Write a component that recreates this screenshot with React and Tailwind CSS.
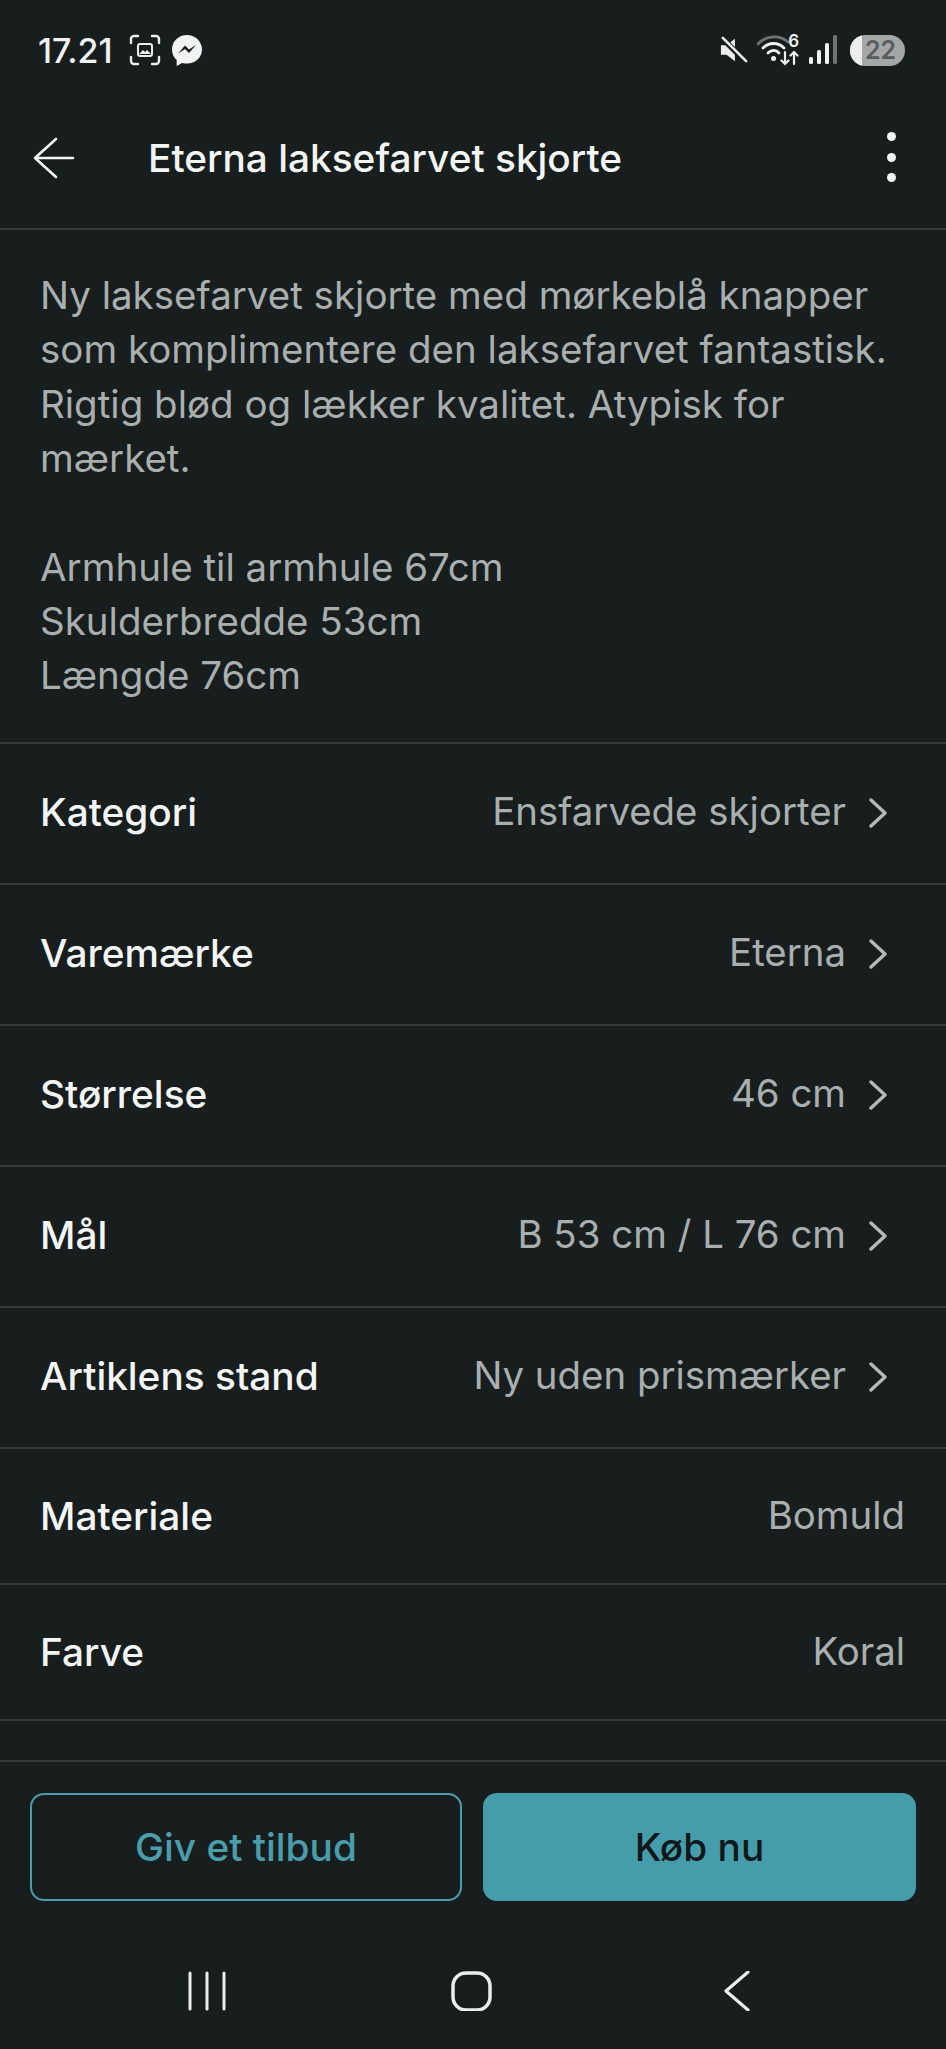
const rows = [
  { label: 'Kategori', value: 'Ensfarvede skjorter', link: true, h: 'h-[141px]' },
  { label: 'Varemærke', value: 'Eterna', link: true, h: 'h-[141px]' },
  { label: 'Størrelse', value: '46 cm', link: true, h: 'h-[141px]' },
  { label: 'Mål', value: 'B 53 cm / L 76 cm', link: true, h: 'h-[141px]' },
  { label: 'Artiklens stand', value: 'Ny uden prismærker', link: true, h: 'h-[141px]' },
  { label: 'Materiale', value: 'Bomuld', h: 'h-[136px]' },
  { label: 'Farve', value: 'Koral', h: 'h-[136px]' },
];

function StatusBar() {
  return (
    <div className="h-[100px] flex items-center justify-between pl-[38px] pr-[41px]">
      <div className="flex items-center">
        <span className="text-[34px] font-medium text-[#f1f3f3] w-[77px] whitespace-nowrap">17.21</span>
        <svg width="32" height="32" viewBox="0 0 32 32" fill="none" stroke="#eceeee" strokeWidth="2.4" strokeLinecap="round" className="ml-[14px]">
          <path d="M2 9V5a3 3 0 0 1 3-3h4M23 2h4a3 3 0 0 1 3 3v4M30 23v4a3 3 0 0 1-3 3h-4M9 30H5a3 3 0 0 1-3-3v-4" />
          <rect x="9" y="10" width="14" height="12" rx="2" strokeWidth="2" />
          <path d="M10 20l4-4 2 2 2-2 4 4z" fill="#eceeee" stroke="none" />
        </svg>
        <svg width="30" height="31" viewBox="0 0 30 31" className="ml-[11px]">
          <path d="M15 0C6.600 0 0 6.200 0 14.500c0 4.300 1.800 8 4.700 10.600V31l5.400-3c1.500.4 3.200.6 4.900.6 8.400 0 15-6.200 15-14.100S23.400 0 15 0z" fill="#f1f3f3" />
          <path d="M6 18.500l7-8 4 4 7-4.500-7 8-4-4z" fill="#181d1e" />
        </svg>
      </div>
      <div className="flex items-center">
        <svg width="28" height="28" viewBox="0 0 30 28" className="mr-[9px]">
          <path d="M1 9h6l9-7v24l-9-7H1z" fill="#eceeee" />
          <path d="M3 2l25 25" stroke="#181d1e" strokeWidth="6" />
          <path d="M3 1l25 25" stroke="#eceeee" strokeWidth="2.800" strokeLinecap="round" />
        </svg>
        <div className="relative w-[42px] h-[32px] mr-[10px]">
          <svg width="42" height="32" viewBox="0 0 42 32" fill="none" strokeLinecap="round">
            <path d="M1 10C9 1 23 1 31 8" stroke="#6f7373" strokeWidth="2.800" />
            <path d="M6 14c6-6 15-6 21 0" stroke="#f1f3f3" strokeWidth="2.800" />
            <path d="M11 19c3.500-3.500 8-3.500 11 0" stroke="#f1f3f3" strokeWidth="2.800" />
            <circle cx="16.500" cy="24.500" r="2.500" fill="#f1f3f3" />
            <path d="M28 18v12m-3.500-3.500 3.500 3.500 3.500-3.500M37 30V18m-3.500 3.500L37 18l3.500 3.500" stroke="#f1f3f3" strokeWidth="2.200" />
          </svg>
          <span className="absolute right-0 -top-[1px] text-[17px] font-semibold text-[#f1f3f3] leading-none">6</span>
        </div>
        <svg width="29" height="30" viewBox="0 0 29 30" className="mr-[12px]">
          <rect x="0" y="22" width="4" height="7" rx="1.500" fill="#f1f3f3" />
          <rect x="8" y="15" width="4" height="14" rx="1.500" fill="#f1f3f3" />
          <rect x="16" y="8" width="4" height="21" rx="1.500" fill="#f1f3f3" />
          <rect x="24" y="0" width="4" height="29" rx="1.500" fill="#6f7373" />
        </svg>
        <div className="w-[55px] h-[31px] rounded-full bg-[#a4a7a7] overflow-hidden flex items-center relative">
          <div className="absolute left-0 top-0 bottom-0 w-[12px] bg-[#eceeee]" />
          <span className="relative w-full text-center pl-[6px] text-[25px] leading-none font-semibold text-[#5a5d5e]">22</span>
        </div>
      </div>
    </div>
  );
}

function Row({ label, value, link, h }) {
  return (
    <div className={`${h} flex items-center justify-between pl-[40px] border-b-2 border-[#35393a] ${link ? 'pb-[3px] pr-[59px]' : 'pr-[41px]'}`}>
      <span className="text-[38.800px] font-medium text-[#f3f5f5]">{label}</span>
      <div className="flex items-center">
        <span className="text-[38.400px] text-[#a9afaf]">{value}</span>
        {link && (
          <svg width="18" height="30" viewBox="0 0 18 30" fill="none" stroke="#b4baba" strokeWidth="3.400" strokeLinecap="round" strokeLinejoin="round" className="ml-[23px] mt-[3px]">
            <path d="M2 2l14 13L2 28" />
          </svg>
        )}
      </div>
    </div>
  );
}

export default function App() {
  return (
    <div className="w-[946px] h-[2049px] bg-[#181d1e] flex flex-col overflow-hidden font-['Inter',sans-serif]">
      <StatusBar />

      <div className="h-[130px] flex items-center border-b-2 border-[#35393a] relative pl-[33px] pb-[12px]">
        <svg width="42" height="42" viewBox="0 0 42 42" fill="none" stroke="#f3f5f5" strokeWidth="2.600" strokeLinecap="round" strokeLinejoin="round">
          <path d="M40 21H2M23 2 2 21l21 19" />
        </svg>
        <span className="ml-[73px] text-[38.800px] font-medium text-[#f3f5f5]">Eterna laksefarvet skjorte</span>
        <div className="absolute right-[50px] top-[32px] flex flex-col gap-[11.500px]">
          <div className="w-[9px] h-[9px] rounded-full bg-[#f3f5f5]" />
          <div className="w-[9px] h-[9px] rounded-full bg-[#f3f5f5]" />
          <div className="w-[9px] h-[9px] rounded-full bg-[#f3f5f5]" />
        </div>
      </div>

      <div className="h-[514px] border-b-2 border-[#35393a] px-[40px] pt-[38px] text-[38.500px] leading-[54.400px] text-[#a9afaf]">
        <p>Ny laksefarvet skjorte med mørkeblå knapper</p>
        <p>som komplimentere den laksefarvet fantastisk.</p>
        <p>Rigtig blød og lækker kvalitet. Atypisk for</p>
        <p>mærket.</p>
        <p className="mt-[54px]">Armhule til armhule 67cm</p>
        <p>Skulderbredde 53cm</p>
        <p>Længde 76cm</p>
      </div>

      {rows.map(r => <Row key={r.label} {...r} />)}

      <div className="h-[41px] border-b-2 border-[#35393a]" />

      <div className="flex gap-[21px] px-[30px] pt-[31px]">
        <button className="w-[432px] h-[108px] rounded-[14px] border-2 border-[#4a9dab] text-[38.800px] font-medium text-[#4a9dab]">Giv et tilbud</button>
        <button className="w-[433px] h-[108px] rounded-[14px] bg-[#459dac] text-[38.800px] font-medium text-[#12181a]">Køb nu</button>
      </div>

      <div className="flex-1 flex items-start pt-[70px]">
        <svg width="946" height="40" viewBox="0 0 946 40" fill="none" stroke="#eceeee" strokeLinecap="round" strokeLinejoin="round">
          <path d="M190 2v36M207 2v36M224 2v36" strokeWidth="3" />
          <rect x="453" y="2" width="37" height="37" rx="13" strokeWidth="3.500" />
          <path d="M748 1 726 20l22 19" strokeWidth="3.200" />
        </svg>
      </div>
    </div>
  );
}
